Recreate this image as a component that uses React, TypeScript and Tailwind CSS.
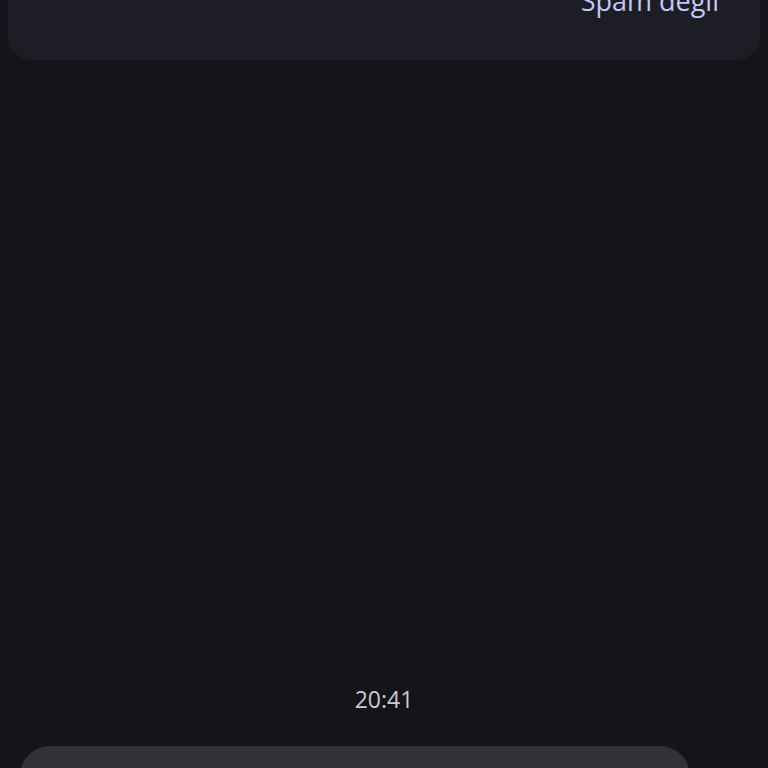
export default function App() {
  return (
    <div
      className="h-[768px] w-[768px] overflow-hidden bg-[#14141b] flex flex-col"
      style={{ fontFamily: "'Open Sans', Roboto, sans-serif" }}
    >
      <div className="mx-2 h-[60px] shrink-0 rounded-b-[24px] bg-[#1d1d25] flex justify-end pr-[41px] overflow-hidden">
        <span className="mt-[-15px] text-[27px] leading-[32px] text-[#c3c8f4]">Spam degil</span>
      </div>
      <div className="mt-[625px] shrink-0 text-center text-[23px] leading-[28px] text-[#cacad0]">20:41</div>
      <div className="mt-[33px] ml-5 w-[670px] h-[60px] shrink-0 rounded-[30px] bg-[#313136]" />
    </div>
  );
}
